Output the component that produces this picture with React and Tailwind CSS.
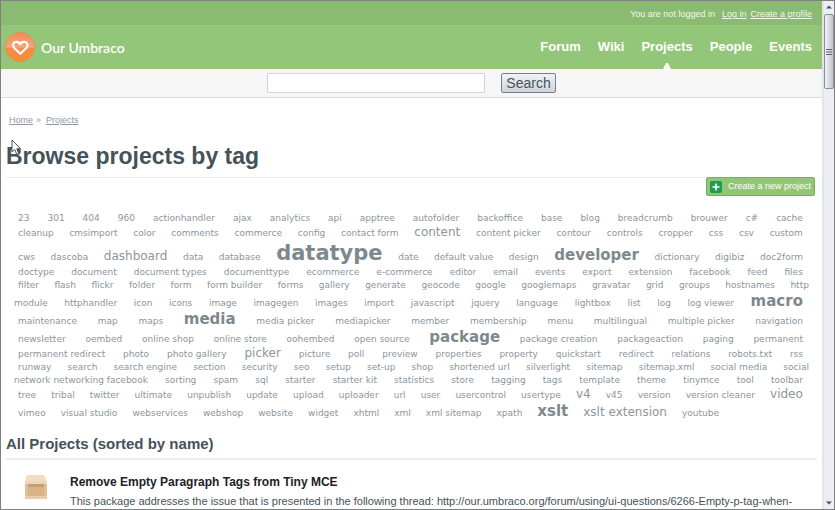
import React from "react";

const SIZES = {
  s: "text-[9px] leading-[13px]",
  m: "text-[12px] leading-[14px]",
  l: "text-[15px] leading-[18px] font-bold text-[#7e898e]",
  xl: "text-[21px] leading-[26px] font-bold text-[#7e898e]",
};

const ROWS = [
  { pad: "pl-3 pr-3.5", tags: "23|301|404|960|actionhandler|ajax|analytics|api|apptree|autofolder|backoffice|base|blog|breadcrumb|brouwer|c#|cache" },
  { pad: "pl-3 pr-3.5", tags: "cleanup|cmsimport|color|comments|commerce|config|contact form|m:content|content picker|contour|controls|cropper|css|csv|custom" },
  { pad: "pl-3 pr-3.5", tags: "cws|dascoba|m:dashboard|data|database|xl:datatype|date|default value|design|l:developer|dictionary|digibiz|doc2form" },
  { pad: "pl-3 pr-3.5", tags: "doctype|document|document types|documenttype|ecommerce|e-commerce|editor|email|events|export|extension|facebook|feed|files" },
  { pad: "pl-3 pr-2", tags: "filter|flash|flickr|folder|form|form builder|forms|gallery|generate|geocode|google|googlemaps|gravatar|grid|groups|hostnames|http" },
  { pad: "pl-2 pr-3.5", tags: "module|httphandler|icon|icons|image|imagegen|images|import|javascript|jquery|language|lightbox|list|log|log viewer|l:macro" },
  { pad: "pl-3 pr-3.5", tags: "maintenance|map|maps|l:media|media picker|mediapicker|member|membership|menu|multilingual|multiple picker|navigation" },
  { pad: "pl-3 pr-3.5", tags: "newsletter|oembed|online shop|online store|oohembed|open source|l:package|package creation|packageaction|paging|permanent" },
  { pad: "pl-3 pr-3.5", tags: "permanent redirect|photo|photo gallery|m:picker|picture|poll|preview|properties|property|quickstart|redirect|relations|robots.txt|rss" },
  { pad: "pl-3 pr-2", tags: "runway|search|search engine|section|security|seo|setup|set-up|shop|shortened url|silverlight|sitemap|sitemap.xml|social media|social" },
  { pad: "pl-2 pr-3.5", tags: "network networking facebook|sorting|spam|sql|starter|starter kit|statistics|store|tagging|tags|template|theme|tinymce|tool|toolbar" },
  { pad: "pl-3 pr-3.5", tags: "tree|tribal|twitter|ultimate|unpublish|update|upload|uploader|url|user|usercontrol|usertype|m:v4|v45|version|version cleaner|m:video" },
  { pad: "pl-3 pr-3.5", last: true, tags: "vimeo|visual studio|webservices|webshop|website|widget|xhtml|xml|xml sitemap|xpath|l:xslt|m:xslt extension|youtube" },
];

function TagRow({ row }) {
  return (
    <div className={`flex items-baseline whitespace-nowrap ${row.pad} ${row.last ? "gap-x-[15px]" : "justify-between"}`}>
      {row.tags.split("|").map((t) => {
        const i = t.indexOf(":");
        const size = i > 0 ? t.slice(0, i) : "s";
        return (
          <a key={t} href="#" className={SIZES[size]}>
            {i > 0 ? t.slice(i + 1) : t}
          </a>
        );
      })}
    </div>
  );
}

function Logo() {
  return (
    <svg width="30" height="30" viewBox="0 0 30 30" aria-hidden="true">
      <defs>
        <linearGradient id="orb" x1="0" y1="0" x2="0" y2="1">
          <stop offset="0" stopColor="#f08c55" />
          <stop offset="0.5" stopColor="#f5a679" />
          <stop offset="0.55" stopColor="#f58e4c" />
          <stop offset="1" stopColor="#fa8a30" />
        </linearGradient>
      </defs>
      <circle cx="15" cy="15" r="14.5" fill="url(#orb)" stroke="#e98a4a" strokeWidth="0.8" />
      <path d="M15.3 21.8 L8.8 15.4 C7 12.8 8.6 9.8 11.4 9.9 C13.4 10 14.7 11 15.3 12.4 C15.9 11 17.2 10 19.2 9.9 C22 9.8 23.6 12.8 21.8 15.4 Z" fill="none" stroke="#fff" strokeWidth="2.1" strokeLinejoin="round" />
    </svg>
  );
}

function Crate() {
  return (
    <svg width="24" height="26" viewBox="0 0 24 26" aria-hidden="true">
      <path d="M3 1 H20 L23 8 H1 Z" fill="#f3dcc2" />
      <rect x="1" y="7" width="22" height="18" rx="1" fill="#e0c09c" />
      <rect x="1" y="7" width="22" height="3" fill="#efd6ba" />
      <rect x="4" y="10" width="16" height="12" fill="#d9b286" />
      <rect x="4" y="10" width="16" height="3" fill="#c69c72" />
      <rect x="1" y="22" width="22" height="3" fill="#e8cba8" />
    </svg>
  );
}

function NavLink({ children, active }) {
  return (
    <a href="#" className="relative flex h-full items-center text-white">
      {children}
      {active && (
        <svg className="absolute bottom-0 left-1/2 -translate-x-1/2" width="8" height="6" viewBox="0 0 8 6" aria-hidden="true">
          <path d="M0 6 L3 0 H5 L8 6 Z" fill="#f7faf5" />
        </svg>
      )}
    </a>
  );
}

function ScrollBar() {
  return (
    <div className="flex w-3 shrink-0 flex-col items-center border-l-2 border-[#e4e4e6] bg-[#ededf5]" aria-hidden="true">
      <svg className="h-[13px]" width="10" height="13" viewBox="0 0 10 13">
        <path d="M2 7.5 L5 4.5 L8 7.5 Z" fill="#4a4f57" />
      </svg>
      <div className="flex h-[75px] w-full items-center justify-center rounded-xs border border-[#8b8d98] bg-linear-to-r from-[#f2f2f5] to-[#c3c4cf]">
        <svg width="6" height="8" viewBox="0 0 6 8">
          <path d="M0 1.5 H6 M0 4 H6 M0 6.5 H6" stroke="#62656f" strokeWidth="1" />
        </svg>
      </div>
      <svg className="mt-auto" width="10" height="13" viewBox="0 0 10 13">
        <path d="M2 5.5 L5 8.5 L8 5.5 Z" fill="#4a4f57" />
      </svg>
    </div>
  );
}

export default function App() {
  return (
    <div className="relative flex h-screen overflow-hidden border border-[#808080] bg-white font-['Liberation_Sans',Arial,sans-serif] text-[#45525a]">
      <div className="min-w-0 flex-1">
        <header className="bg-[#94c679]">
          <div className="flex h-6 items-center justify-end gap-[7px] bg-[#8bbb71] pt-1 pr-2.5 text-[9px] text-[#f1f8ec]">
            <span>You are not logged in</span>
            <div className="flex gap-1">
              <a href="#" className="underline">Log in</a>
              <a href="#" className="underline">Create a profile</a>
            </div>
          </div>
          <div className="flex h-11 items-center justify-between pr-2.5 pl-1">
            <a href="#" className="flex items-center gap-1.5 font-[Lato,sans-serif] text-[14px] font-semibold text-white">
              <Logo />
              Our Umbraco
            </a>
            <nav className="flex h-full gap-[17px] text-[13px] font-bold">
              <NavLink>Forum</NavLink>
              <NavLink>Wiki</NavLink>
              <NavLink active>Projects</NavLink>
              <NavLink>People</NavLink>
              <NavLink>Events</NavLink>
            </nav>
          </div>
        </header>

        <form className="flex h-[29px] items-center justify-center gap-4 border-b border-[#dcdce0] bg-[#f6f6f6]">
          <input type="text" aria-label="Search projects" className="h-5 w-[218px] border border-[#d2d2dc] bg-white px-1 text-xs outline-none" />
          <button type="button" className="h-5 rounded-xs border border-[#7c7d8c] bg-linear-to-b from-[#f1f2f4] to-[#cfd5da] px-1 text-[14px] leading-[18px]">
            Search
          </button>
        </form>

        <main className="px-[5px]">
          <nav aria-label="Breadcrumb" className="mt-4 flex gap-[3px] pl-[3px] text-[9px] leading-3 text-[#9197a5]">
            <a href="#" className="underline">Home</a>
            <span>»</span>
            <a href="#" className="ml-0.5 underline">Projects</a>
          </nav>

          <h1 className="mt-4 text-[23px] leading-7 font-bold">Browse projects by tag</h1>

          <div className="mt-[7px] flex items-start">
            <div className="h-px flex-1 bg-[#ededed]" />
            <button type="button" className="mr-0.5 flex h-[19px] items-center gap-1.5 rounded-xs border border-[#7fa868] bg-[#92c576] px-[3px] text-[9px] whitespace-nowrap text-white">
              <svg width="12" height="12" viewBox="0 0 12 12" aria-hidden="true">
                <rect width="12" height="12" rx="2" fill="#1d9d51" />
                <path d="M6 2.5 V9.5 M2.5 6 H9.5" stroke="#fff" strokeWidth="1.6" />
              </svg>
              Create a new project
            </button>
          </div>

          <div className="mt-4 font-['DejaVu_Sans',Verdana,sans-serif] text-[#8c959c]">
            {ROWS.map((row) => (
              <TagRow key={row.tags} row={row} />
            ))}
          </div>

          <h2 className="mt-3.5 border-b-2 border-[#eceeed] pb-1 text-[15px] leading-5 font-bold">
            All Projects (sorted by name)
          </h2>

          <article className="mt-3.5 flex gap-[22px] pl-[18px]">
            <Crate />
            <div className="min-w-0">
              <h3 className="text-[12px] leading-4 font-bold">
                <a href="#" className="text-[#1c2226]">Remove Empty Paragraph Tags from Tiny MCE</a>
              </h3>
              <p className="mt-[3px] text-[11px] leading-4 whitespace-nowrap">
                This package addresses the issue that is presented in the following thread: http://our.umbraco.org/forum/using/ui-questions/6266-Empty-p-tag-when-
              </p>
            </div>
          </article>
        </main>
      </div>
      <ScrollBar />
      <svg className="absolute top-[138px] left-2.5" width="11" height="17" viewBox="0 0 11 17" aria-hidden="true">
        <path d="M1 1 V13 L3.8 10.5 L5.8 15.5 L7.8 14.6 L5.8 9.8 H9.6 Z" fill="#fff" stroke="#4a5158" strokeWidth="1" />
      </svg>
    </div>
  );
}
